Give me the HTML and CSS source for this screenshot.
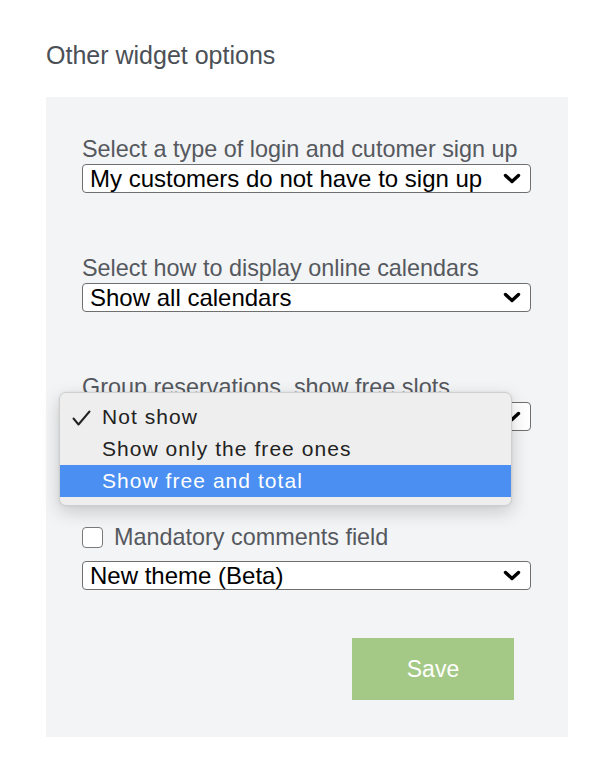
FILE: index.html
```html
<!DOCTYPE html>
<html lang="en">
<head>
<meta charset="utf-8">
<title>Other widget options</title>
<link rel="stylesheet" href="styles.css">
</head>
<body>
<h2 class="title">Other widget options</h2>
<section class="panel">
  <div class="field">
    <div class="label">Select a type of login and cutomer sign up</div>
    <div class="select"><span>My customers do not have to sign up</span><svg class="chev" width="18" height="11" viewBox="0 0 18 11"><path d="M2.5 2.5 L9 8.5 L15.5 2.5" fill="none" stroke="#000" stroke-width="3.4" stroke-linecap="round" stroke-linejoin="round"/></svg></div>
  </div>
  <div class="field">
    <div class="label">Select how to display online calendars</div>
    <div class="select"><span>Show all calendars</span><svg class="chev" width="18" height="11" viewBox="0 0 18 11"><path d="M2.5 2.5 L9 8.5 L15.5 2.5" fill="none" stroke="#000" stroke-width="3.4" stroke-linecap="round" stroke-linejoin="round"/></svg></div>
  </div>
  <div class="field field-popup">
    <div class="label">Group reservations, show free slots</div>
    <div class="select"><span></span><svg class="chev" width="18" height="11" viewBox="0 0 18 11"><path d="M2.5 2.5 L9 8.5 L15.5 2.5" fill="none" stroke="#000" stroke-width="3.4" stroke-linecap="round" stroke-linejoin="round"/></svg></div>
    <ul class="menu">
      <li class="item"><svg class="check" width="19" height="16" viewBox="0 0 19 16"><path d="M1.5 8.5 L6.5 14.5 L17.5 1.5" fill="none" stroke="#222" stroke-width="2" stroke-linecap="round" stroke-linejoin="round"/></svg>Not show</li>
      <li class="item">Show only the free ones</li>
      <li class="item active">Show free and total</li>
    </ul>
  </div>
  <label class="checkrow"><span class="box"></span><span>Mandatory comments field</span></label>
  <div class="select select-theme"><span>New theme (Beta)</span><svg class="chev" width="18" height="11" viewBox="0 0 18 11"><path d="M2.5 2.5 L9 8.5 L15.5 2.5" fill="none" stroke="#000" stroke-width="3.4" stroke-linecap="round" stroke-linejoin="round"/></svg></div>
  <div class="actions"><button class="save" type="button">Save</button></div>
</section>
</body>
</html>
```
FILE: styles.css
```css
* { box-sizing: border-box; }
body {
  margin: 0;
  background: #ffffff;
  font-family: "Liberation Sans", Arial, Helvetica, sans-serif;
}
.title {
  margin: 40px 0 0 46px;
  font-size: 25px;
  line-height: 30px;
  font-weight: normal;
  color: #4b5056;
}
.panel {
  margin: 27px 0 0 46px;
  width: 522px;
  background: #f3f4f5;
  padding: 39px 37px 37px 36px;
  display: flex;
  flex-direction: column;
}
.field {
  display: flex;
  flex-direction: column;
}
.field + .field { margin-top: 62px; }
.field-popup { position: relative; }
.label {
  font-size: 23.4px;
  line-height: 26px;
  color: #55595f;
  white-space: nowrap;
}
.select {
  margin-top: 2px;
  height: 29px;
  background: #fff;
  border: 1px solid #6f6f6f;
  border-radius: 4px;
  padding: 0 9px 0 7px;
  display: flex;
  align-items: center;
  justify-content: space-between;
  font-size: 24px;
  color: #000;
  white-space: nowrap;
}
.chev { flex: none; }
.menu {
  position: absolute;
  left: -23px;
  top: 18px;
  width: 453px;
  margin: 0;
  padding: 8px 0;
  list-style: none;
  background: #eeeeee;
  border: 1px solid #cfcfcf;
  border-radius: 7px;
  box-shadow: 0 6px 18px rgba(0,0,0,0.18), 0 0 3px rgba(0,0,0,0.08);
}
.item {
  position: relative;
  height: 32px;
  padding-left: 42px;
  display: flex;
  align-items: center;
  font-family: "Liberation Sans", Arial, sans-serif;
  font-size: 21px;
  letter-spacing: 1.05px;
  color: #222;
}
.item.active {
  background: #4a8ff1;
  color: #fff;
}
.check {
  position: absolute;
  left: 12px;
  top: 9px;
}
.checkrow {
  margin-top: 93px;
  height: 26px;
  display: flex;
  align-items: center;
  gap: 11px;
  font-size: 23.4px;
  color: #55595f;
}
.box {
  width: 21px;
  height: 21px;
  background: #fff;
  border: 1.5px solid #7a7a7a;
  border-radius: 4px;
}
.select-theme { margin-top: 11px; }
.actions {
  margin-top: 48px;
  display: flex;
  justify-content: flex-end;
  padding-right: 17px;
}
.save {
  width: 162px;
  height: 62px;
  border: none;
  background: #a4c986;
  color: #fff;
  font-family: "Liberation Sans", Arial, sans-serif;
  font-size: 23px;
}
```
